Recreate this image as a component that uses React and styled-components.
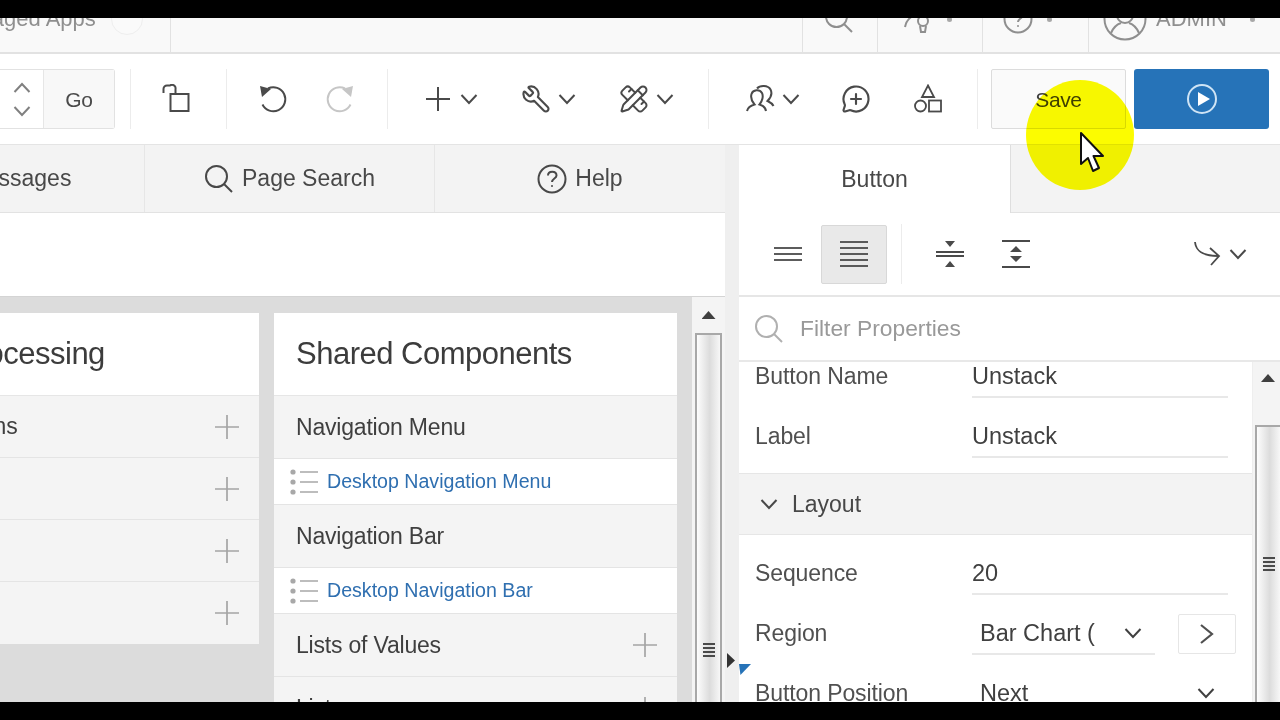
import React from "react";
import styled, { createGlobalStyle } from "styled-components";
import { Wrench, PencilRuler, MessageCirclePlus } from "lucide-react";

const Global = createGlobalStyle`
  html, body { margin: 0; padding: 0; background: #000; overflow: hidden; }
  * { box-sizing: border-box; }
  body { font-family: "Liberation Sans", Arial, sans-serif; color: #404040; }
`;

const Page = styled.div`
  position: relative;
  width: 1280px;
  height: 720px;
  display: flex;
  flex-direction: column;
  overflow: hidden;
  background: #000;
`;
const BlackBar = styled.div`
  height: 18px;
  flex: none;
  background: #000;
`;

/* top header */
const TopBar = styled.header`
  height: 36px;
  flex: none;
  display: flex;
  background: #f9f9f9;
  border-bottom: 2px solid #e2e2e2;
  overflow: hidden;
`;
const TopItem = styled.div`
  flex: ${(p) => (p.$grow ? "1" : "none")};
  width: ${(p) => (p.$w ? `${p.$w}px` : "auto")};
  height: 34px;
  padding: 0 0 32px ${(p) => p.$pl || 0}px;
  margin-left: ${(p) => p.$ml || 0}px;
  display: flex;
  align-items: center;
  gap: ${(p) => p.$gap || 0}px;
  border-left: ${(p) => (p.$line ? "1px solid #e2e2e2" : "none")};
  border-right: ${(p) => (p.$rline ? "1px solid #e2e2e2" : "none")};
  color: #8f8f8f;
  font-size: 22px;
  white-space: nowrap;
`;
const TopBadge = styled.span`
  width: 32px;
  height: 32px;
  flex: none;
  border-radius: 50%;
  border: 1px solid #eeeeee;
  background: #fafafa;
`;
const Dot = styled.span`
  width: 5px;
  height: 5px;
  flex: none;
  margin-left: ${(p) => p.$ml || 0}px;
  border-radius: 50%;
  background: #a8a8a8;
`;

/* main toolbar */
const Toolbar = styled.div`
  height: 91px;
  flex: none;
  display: flex;
  align-items: center;
  background: #fff;
  border-bottom: 1px solid #e4e4e4;
  padding-bottom: 1px;
`;
const Spinner = styled.div`
  width: 115px;
  height: 60px;
  flex: none;
  display: flex;
  border: 1px solid #e2e2e2;
  border-left: none;
  border-radius: 0 3px 3px 0;
`;
const SpinArrows = styled.div`
  width: 44px;
  display: flex;
  flex-direction: column;
  align-items: center;
  justify-content: center;
  gap: 5px;
  padding-top: 2px;
  color: #808080;
  border-right: 1px solid #e6e6e6;
`;
const GoBtn = styled.div`
  flex: 1;
  display: flex;
  align-items: center;
  justify-content: center;
  padding-top: 3px;
  background: #f8f8f8;
  font-size: 21px;
  letter-spacing: -0.2px;
  color: #4a4a4a;
`;
const Sep = styled.span`
  width: 1px;
  height: 60px;
  flex: none;
  margin-left: ${(p) => p.$ml || 0}px;
  background: #ececec;
`;
const Tool = styled.div`
  width: ${(p) => p.$w}px;
  flex: none;
  display: flex;
  align-items: center;
  gap: 7px;
  padding-left: ${(p) => p.$pl || 0}px;
  justify-content: ${(p) => (p.$pl ? "flex-start" : "center")};
  color: ${(p) => (p.$off ? "#c6c6c6" : "#4a4a4a")};
`;
const SaveBtn = styled.button`
  width: 135px;
  height: 60px;
  flex: none;
  margin-left: 13px;
  padding: 3px 0 0;
  border: 1px solid #dcdcdc;
  border-radius: 2px;
  background: #fafafa;
  font: 21px "Liberation Sans", Arial, sans-serif;
  letter-spacing: -0.4px;
  color: #404040;
`;
const RunBtn = styled.button`
  width: 135px;
  height: 60px;
  flex: none;
  margin-left: 8px;
  border: none;
  border-radius: 3px;
  background: #2673b8;
  display: flex;
  align-items: center;
  justify-content: center;
`;

/* panes */
const Main = styled.main`
  flex: 1;
  min-height: 0;
  display: flex;
`;
const LeftPane = styled.section`
  width: 725px;
  flex: none;
  display: flex;
  flex-direction: column;
  overflow: hidden;
`;
const Tabs = styled.nav`
  height: 68px;
  flex: none;
  display: flex;
  background: #f3f3f3;
  border-bottom: 1px solid #e2e2e2;
`;
const Tab = styled.div`
  width: ${(p) => p.$w}px;
  flex: none;
  margin-left: ${(p) => p.$ml || 0}px;
  display: flex;
  align-items: center;
  justify-content: center;
  gap: 8px;
  font-size: 23px;
  color: #484848;
  border-right: 1px solid #e6e6e6;
`;
const PropTab = styled(Tab)`
  height: 68px;
  background: #fff;
  border-right: 1px solid #dedede;
`;
const Band = styled.div`
  height: 84px;
  flex: none;
  background: #fff;
  border-bottom: 1px solid #d4d4d4;
`;
const Content = styled.div`
  flex: 1;
  min-height: 0;
  display: flex;
`;
const Canvas = styled.div`
  flex: 1;
  min-width: 0;
  overflow: hidden;
  display: flex;
  align-items: flex-start;
  gap: 15px;
  padding-top: 16px;
  background: #dcdcdc;
`;
const Card = styled.article`
  width: 403px;
  flex: none;
  margin-left: ${(p) => p.$ml || 0}px;
  background: #f4f4f4;
`;
const CardTitle = styled.h2`
  height: 83px;
  margin: 0;
  padding-left: 22px;
  display: flex;
  align-items: center;
  background: #fff;
  border-bottom: 1px solid #e6e6e6;
  font-size: 31px;
  letter-spacing: -0.5px;
  font-weight: 400;
  color: #3c3c3c;
  white-space: nowrap;
`;
const GroupRow = styled.div`
  height: ${(p) => p.$h || 63}px;
  display: flex;
  align-items: center;
  justify-content: space-between;
  padding: 0 20px 0 22px;
  font-size: 23px;
  letter-spacing: -0.2px;
  color: #3f3f3f;
  border-bottom: 1px solid #e4e4e4;
  white-space: nowrap;
  &:last-child { border-bottom: none; }
`;
const PlusMark = styled.span`
  display: flex;
  color: #a4a4a4;
`;
const LinkRow = styled.div`
  height: 46px;
  display: flex;
  align-items: center;
  gap: 9px;
  padding-left: 16px;
  background: #fff;
  border-bottom: 1px solid #e4e4e4;
  font-size: 19.6px;
  color: #2f6fb0;
  white-space: nowrap;
`;

/* scrollbars */
const ScrollTrack = styled.div`
  width: ${(p) => p.$w}px;
  flex: none;
  display: flex;
  flex-direction: column;
  background: #f4f4f4;
`;
const ScrollUp = styled.div`
  height: ${(p) => p.$h}px;
  flex: none;
  display: flex;
  justify-content: center;
  padding-top: ${(p) => p.$pt}px;
  padding-left: ${(p) => p.$pl || 0}px;
  &::before {
    content: "";
    width: 14px;
    height: 8px;
    background: #3f3f3f;
    clip-path: polygon(50% 0, 100% 100%, 0 100%);
  }
`;
const ScrollThumb = styled.div`
  flex: 1;
  display: flex;
  justify-content: center;
  padding-top: ${(p) => p.$gripTop}px;
  margin-left: ${(p) => (p.$open ? 2 : 3)}px;
  margin-right: ${(p) => (p.$open ? 0 : 3)}px;
  border: 2px solid #a8a8a8;
  border-bottom: none;
  border-right: ${(p) => (p.$open ? "none" : "2px solid #a8a8a8")};
  background: linear-gradient(90deg, #fdfdfd 0%, #dcdcdc 55%, #f7f7f7 100%);
`;
const Grip = styled.span`
  width: 12px;
  height: 14px;
  flex: none;
  background: repeating-linear-gradient(180deg, #4a4a4a 0 2px, transparent 2px 4px);
`;
const Splitter = styled.div`
  position: relative;
  width: 14px;
  flex: none;
  background: #efefef;
`;
const SplitArrow = styled.span`
  position: absolute;
  left: 2px;
  top: 508px;
  width: 8px;
  height: 15px;
  background: #333;
  clip-path: polygon(0 0, 100% 50%, 0 100%);
`;

/* properties */
const RightPane = styled.aside`
  position: relative;
  flex: 1;
  min-width: 0;
  display: flex;
  flex-direction: column;
  background: #fff;
`;
const PropTabs = styled.nav`
  height: 68px;
  flex: none;
  display: flex;
  background: #f3f3f3;
`;
const PropTabRest = styled.div`
  flex: 1;
  border-bottom: 1px solid #e2e2e2;
`;
const PropTools = styled.div`
  height: 84px;
  flex: none;
  display: flex;
  align-items: center;
  border-bottom: 2px solid #e6e6e6;
  color: #4a4a4a;
`;
const PropTool = styled.div`
  width: ${(p) => p.$w}px;
  height: 59px;
  flex: none;
  margin-left: ${(p) => p.$ml || 0}px;
  display: flex;
  align-items: center;
  justify-content: center;
  gap: 6px;
  border-radius: 2px;
  border: ${(p) => (p.$on ? "1px solid #d8d8d8" : "none")};
  background: ${(p) => (p.$on ? "#e9e9e9" : "transparent")};
`;
const FilterRow = styled.div`
  height: 65px;
  flex: none;
  display: flex;
  align-items: center;
  gap: 16px;
  padding-left: 15px;
  border-bottom: 2px solid #e8e8e8;
  font-size: 22.8px;
  color: #999;
  background: #fff;
`;
const FilterLens = styled.span`
  display: flex;
  color: #b0b0b0;
`;
const PropBody = styled.div`
  flex: 1;
  min-height: 0;
  display: flex;
`;
const PropList = styled.div`
  flex: 1;
  min-width: 0;
  overflow: hidden;
  border-right: 1px solid #eeeeee;
`;
const PropInner = styled.div`
  margin-top: -16px;
`;
const PropRow = styled.div`
  height: 60px;
  display: flex;
  align-items: center;
  padding: 1px 0 0 16px;
  font-size: 23px;
  letter-spacing: -0.1px;
  color: #505050;
  white-space: nowrap;
`;
const PropLabel = styled.span`
  width: 217px;
  flex: none;
`;
const PropValue = styled.div`
  width: ${(p) => p.$w || 256}px;
  height: 44px;
  flex: none;
  align-self: flex-start;
  margin-top: 7px;
  display: flex;
  align-items: center;
  justify-content: space-between;
  padding: 2px ${(p) => (p.$select ? 13 : 0)}px 0 ${(p) => (p.$select ? 8 : 0)}px;
  border-bottom: 2px solid #e8e8e8;
  color: #404040;
  font-size: 23.5px;
  letter-spacing: 0;
`;
const JumpBtn = styled.span`
  width: 58px;
  height: 40px;
  flex: none;
  margin-left: 23px;
  display: flex;
  align-items: center;
  justify-content: center;
  border: 1px solid #e6e6e6;
  border-radius: 2px;
  color: #505050;
`;
const SectionHead = styled.div`
  height: 62px;
  margin: 7px 0 8px;
  display: flex;
  align-items: center;
  gap: 14px;
  padding-left: 21px;
  background: #f3f3f3;
  border-top: 1px solid #e6e6e6;
  border-bottom: 1px solid #e6e6e6;
  font-size: 23px;
  color: #484848;
`;
const Marker = styled.span`
  position: absolute;
  left: 0;
  top: 519px;
  width: 12px;
  height: 11px;
  background: #2673b8;
  clip-path: polygon(0 0, 100% 0, 12% 100%);
`;

/* overlay */
const Spot = styled.div`
  position: absolute;
  left: 1026px;
  top: 80px;
  width: 108px;
  height: 110px;
  border-radius: 50%;
  background: #fcfc00;
  mix-blend-mode: multiply;
  pointer-events: none;
`;
const Pointer = styled.svg`
  position: absolute;
  left: 1078px;
  top: 131px;
  pointer-events: none;
`;

/* icons */
const Ico = ({ s = 30, w = 2, children }) => (
  <svg width={s} height={s} viewBox={`0 0 ${s} ${s}`} fill="none" stroke="currentColor" strokeWidth={w} style={{ flex: "none" }}>
    {children}
  </svg>
);
const Chevron = ({ s = 18 }) => (
  <svg width={s} height={s} viewBox="0 0 18 18" fill="none" stroke="currentColor" strokeWidth="2" style={{ flex: "none" }}>
    <polyline points="1.5,5 9,13 16.5,5" />
  </svg>
);
const ChevronUp = ({ s = 18 }) => (
  <svg width={s} height={s} viewBox="0 0 18 18" fill="none" stroke="currentColor" strokeWidth="2" style={{ flex: "none" }}>
    <polyline points="1.5,13 9,5 16.5,13" />
  </svg>
);
const Plus = ({ s = 24, w = 2 }) => (
  <svg width={s} height={s} viewBox="0 0 24 24" fill="none" stroke="currentColor" strokeWidth={w} style={{ flex: "none" }}>
    <path d="M0 12H24M12 0V24" />
  </svg>
);
const ToolPlus = () => (
  <Ico w={2}>
    <path d="M3 15H27M15 3V27" />
  </Ico>
);
const Lens = ({ w = 2 }) => (
  <Ico s={30} w={w}>
    <circle cx="12.5" cy="12.5" r="10.5" />
    <path d="M20 20L28 28" />
  </Ico>
);
const LockOpen = () => (
  <Ico>
    <rect x="9.5" y="10" width="18" height="17" />
    <path d="M2.5 9V5A3.5 3.5 0 0 1 6 1.5H9A3.5 3.5 0 0 1 14.5 5V10" />
  </Ico>
);
const Undo = () => (
  <Ico>
    <path d="M10 4.5A12 12 0 1 1 4.5 20.5" />
    <path d="M2 2L13 5L4 13Z" fill="currentColor" stroke="none" />
  </Ico>
);
const Redo = () => (
  <Ico>
    <path d="M20 4.5A12 12 0 1 0 25.5 20.5" />
    <path d="M28 2L17 5L26 13Z" fill="currentColor" stroke="none" />
  </Ico>
);
const People = () => (
  <Ico>
    <path d="M2 27C3 23 6 21.5 9.5 20.5C6.5 17 5.5 13.5 6.5 10C8 5.5 14.5 5 17 9C18.5 12 17.5 17 14.5 20.5C18 21.5 20.5 23.5 21 27" />
    <path d="M12 4.5C15 1 23 1 25.5 5.5C27.5 9.5 25.5 14 22.5 17C24.5 18 27 19 28.5 22" />
  </Ico>
);
const Shapes = () => (
  <Ico w={1.8}>
    <path d="M15 1.5L21 13H9Z" />
    <circle cx="7.5" cy="22" r="5.5" />
    <rect x="16" y="16.5" width="12" height="11" />
  </Ico>
);
const PlayCircle = () => (
  <svg width="32" height="32" viewBox="0 0 32 32" fill="none" stroke="#cfe4f5" strokeWidth="2">
    <circle cx="16" cy="16" r="14" />
    <path d="M12 9L24 16L12 23Z" fill="#fff" stroke="none" />
  </svg>
);
const Help = () => (
  <Ico>
    <circle cx="15" cy="15" r="13.5" />
    <path d="M11 11.5C11 6.5 19.5 6.5 19.5 11.5C19.5 14.5 15 14.5 15 18" />
    <circle cx="15" cy="22" r="1" fill="currentColor" stroke="none" />
  </Ico>
);
const DevTools = () => (
  <Ico s={36} w={2}>
    <path d="M2 26C3 20 7 16 12 14" />
    <circle cx="20" cy="20" r="5" />
    <path d="M17 25L18 31H22L23 25M20 6V15" />
  </Ico>
);
const Avatar = () => (
  <Ico s={44} w={2}>
    <circle cx="22" cy="22" r="20.5" />
    <circle cx="22" cy="18" r="8" />
    <path d="M8 36C11 29 15 27 18 26M36 36C33 29 29 27 26 26" />
  </Ico>
);
const Bars = ({ ys }) => (
  <Ico s={30} w={1.8}>
    {ys.map((y) => (
      <path key={y} d={`M1 ${y}H29`} />
    ))}
  </Ico>
);
const Shrink = () => (
  <Ico s={30} w={2}>
    <path d="M1 13H29M1 17H29" />
    <path d="M10 2H20L15 8ZM10 28H20L15 22Z" fill="currentColor" stroke="none" />
  </Ico>
);
const Expand = () => (
  <Ico s={30} w={2}>
    <path d="M1 2H29M1 28H29" />
    <path d="M9 13L15 7L21 13ZM9 17H21L15 23Z" fill="currentColor" stroke="none" />
  </Ico>
);
const Swerve = () => (
  <Ico s={30} w={1.8}>
    <path d="M2 3C3 12 9 17 25 17M17 9L26 17L18 26" />
  </Ico>
);
const ListGlyph = () => (
  <svg width="28" height="26" viewBox="0 0 28 26" fill="none" stroke="#a8a8a8" strokeWidth="1.6" style={{ flex: "none" }}>
    <circle cx="3" cy="3" r="2.6" fill="#a8a8a8" stroke="none" />
    <circle cx="3" cy="13" r="2.6" fill="#a8a8a8" stroke="none" />
    <circle cx="3" cy="23" r="2.6" fill="#a8a8a8" stroke="none" />
    <path d="M10 3H28M10 13H28M10 23H28" />
  </svg>
);
const Bubble = () => (
  <Ico>
    <path d="M3 4H27V22H12L6 27V22H3Z" />
  </Ico>
);
const Angle = () => (
  <svg width="18" height="22" viewBox="0 0 18 22" fill="none" stroke="currentColor" strokeWidth="2.2">
    <polyline points="3,2 14,11 3,20" />
  </svg>
);
const FlipX = styled.span`
  display: flex;
  transform: scaleX(-1);
`;

const Processing = ["Computations", "Validations", "Processes", "Branches"];

export default function App() {
  return (
    <Page>
      <Global />
      <BlackBar />
      <TopBar>
        <TopItem $ml={-51} $w={222} $gap={15} $rline>
          Managed Apps
          <TopBadge />
        </TopItem>
        <TopItem $grow />
        <TopItem $w={75} $pl={21} $line>
          <Lens />
        </TopItem>
        <TopItem $w={105} $pl={25} $gap={8} $line>
          <DevTools />
          <Dot />
        </TopItem>
        <TopItem $w={106} $pl={20} $gap={14} $line>
          <Help />
          <Dot />
        </TopItem>
        <TopItem $w={192} $pl={14} $gap={9} $line>
          <Avatar />
          ADMIN
          <Dot $ml={14} />
        </TopItem>
      </TopBar>

      <Toolbar>
        <Spinner>
          <SpinArrows>
            <ChevronUp />
            <Chevron />
          </SpinArrows>
          <GoBtn>Go</GoBtn>
        </Spinner>
        <Sep $ml={15} />
        <Tool $w={90}><LockOpen /></Tool>
        <Sep $ml={5} />
        <Tool $w={92}><Undo /></Tool>
        <Tool $w={42} $off><Redo /></Tool>
        <Sep $ml={26} />
        <Tool $w={97} $pl={35}><ToolPlus /><Chevron /></Tool>
        <Tool $w={97} $pl={36}>
          <FlipX><Wrench size={30} strokeWidth={1.7} /></FlipX>
          <Chevron />
        </Tool>
        <Tool $w={97} $pl={37}><PencilRuler size={30} strokeWidth={1.6} /><Chevron /></Tool>
        <Sep $ml={29} />
        <Tool $w={110} $pl={36}><People /><Chevron /></Tool>
        <Tool $w={72} $pl={22}><MessageCirclePlus size={30} strokeWidth={1.7} /></Tool>
        <Tool $w={60} $pl={22}><Shapes /></Tool>
        <Sep $ml={26} />
        <SaveBtn>Save</SaveBtn>
        <RunBtn aria-label="Run"><PlayCircle /></RunBtn>
      </Toolbar>

      <Main>
        <LeftPane>
          <Tabs>
            <Tab $ml={-144} $w={289}><Bubble />Messages</Tab>
            <Tab $w={290}><Lens />Page Search</Tab>
            <Tab $w={291}><Help />Help</Tab>
          </Tabs>
          <Band />
          <Content>
            <Canvas>
              <Card $ml={-144}>
                <CardTitle>Page Processing</CardTitle>
                {Processing.map((t) => (
                  <GroupRow key={t} $h={62}>
                    {t}
                    <PlusMark><Plus w={1.7} /></PlusMark>
                  </GroupRow>
                ))}
              </Card>
              <Card>
                <CardTitle>Shared Components</CardTitle>
                <GroupRow>Navigation Menu</GroupRow>
                <LinkRow><ListGlyph />Desktop Navigation Menu</LinkRow>
                <GroupRow>Navigation Bar</GroupRow>
                <LinkRow><ListGlyph />Desktop Navigation Bar</LinkRow>
                <GroupRow>Lists of Values<PlusMark><Plus w={1.7} /></PlusMark></GroupRow>
                <GroupRow>Lists<PlusMark><Plus w={1.7} /></PlusMark></GroupRow>
              </Card>
            </Canvas>
            <ScrollTrack $w={33}>
              <ScrollUp $h={36} $pt={14} />
              <ScrollThumb $gripTop={308}><Grip /></ScrollThumb>
            </ScrollTrack>
          </Content>
        </LeftPane>
        <Splitter><SplitArrow /></Splitter>
        <RightPane>
          <PropTabs>
            <PropTab $w={272}>Button</PropTab>
            <PropTabRest />
          </PropTabs>
          <PropTools>
            <PropTool $w={66} $ml={16}><Bars ys={[9, 15, 21]} /></PropTool>
            <PropTool $w={66} $on><Bars ys={[3, 9, 15, 21, 27]} /></PropTool>
            <Sep $ml={14} />
            <PropTool $w={66} $ml={15}><Shrink /></PropTool>
            <PropTool $w={66}><Expand /></PropTool>
            <PropTool $w={66} $ml={138}><Swerve /><Chevron /></PropTool>
          </PropTools>
          <FilterRow>
            <FilterLens><Lens /></FilterLens>
            Filter Properties
          </FilterRow>
          <PropBody>
            <PropList>
              <PropInner>
                <PropRow>
                  <PropLabel>Button Name</PropLabel>
                  <PropValue>Unstack</PropValue>
                </PropRow>
                <PropRow>
                  <PropLabel>Label</PropLabel>
                  <PropValue>Unstack</PropValue>
                </PropRow>
                <SectionHead><Chevron s={18} />Layout</SectionHead>
                <PropRow>
                  <PropLabel>Sequence</PropLabel>
                  <PropValue>20</PropValue>
                </PropRow>
                <PropRow>
                  <PropLabel>Region</PropLabel>
                  <PropValue $w={183} $select>Bar Chart (<Chevron /></PropValue>
                  <JumpBtn><Angle /></JumpBtn>
                </PropRow>
                <PropRow>
                  <PropLabel>Button Position</PropLabel>
                  <PropValue $select>Next<Chevron /></PropValue>
                </PropRow>
              </PropInner>
            </PropList>
            <ScrollTrack $w={27}>
              <ScrollUp $h={63} $pt={12} $pl={3} />
              <ScrollThumb $gripTop={130} $open><Grip /></ScrollThumb>
            </ScrollTrack>
          </PropBody>
          <Marker />
        </RightPane>
      </Main>
      <BlackBar />

      <Spot />
      <Pointer width="28" height="44" viewBox="0 0 28 44">
        <path d="M3 2L3 33L10 27L15 40L21 37L15.5 25H25Z" fill="#fff" stroke="#111" strokeWidth="2" strokeLinejoin="round" />
      </Pointer>
    </Page>
  );
}
